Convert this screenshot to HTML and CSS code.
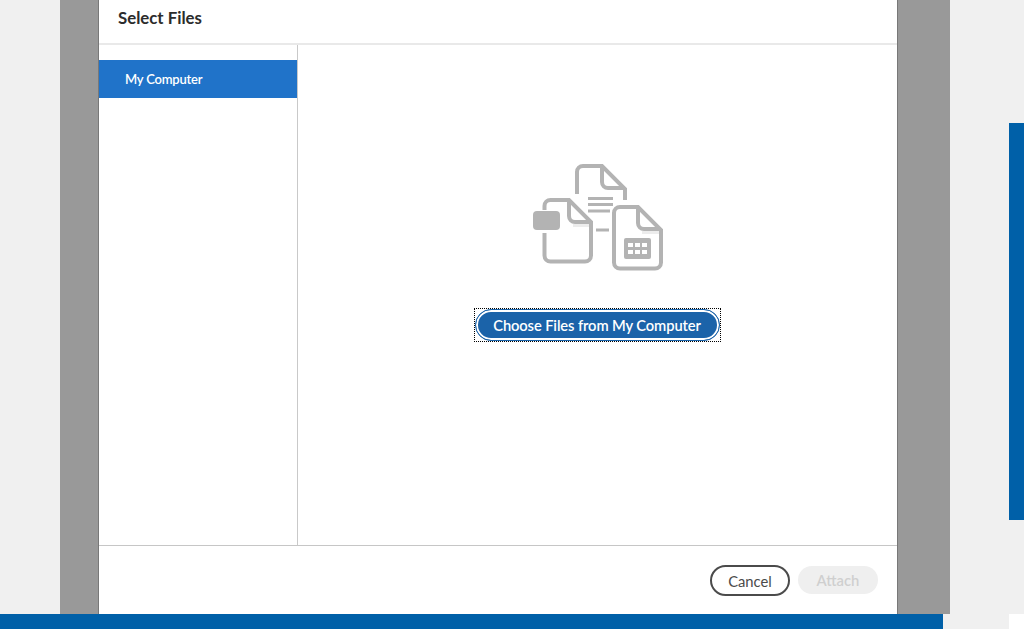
FILE: index.html
```html
<!DOCTYPE html>
<html lang="en">
<head>
<meta charset="utf-8">
<title>Select Files</title>
<link rel="stylesheet" href="styles.css">
</head>
<body>
<div class="page">
  <div class="main">
    <div class="rail"><div class="rail-bar"></div></div>
  </div>
  <div class="bottom">
    <div class="bottom-bar"></div>
    <div class="bottom-gap"></div>
    <div class="bottom-end"></div>
  </div>
  <div class="backdrop">
    <div class="dialog">
      <header class="dialog-head"><h1 class="dialog-title">Select Files</h1></header>
      <div class="dialog-body">
        <nav class="side">
          <div class="side-item">My Computer</div>
        </nav>
        <section class="pane">
          <svg class="files-icon" viewBox="528 160 140 115" width="140" height="115" aria-hidden="true">
            <g class="icon-soft">
              <rect x="573" y="224" width="17" height="3"/>
              <rect x="642" y="231" width="17" height="3"/>
            </g>
            <g class="icon-line">
              <path d="M577 194V172a6 6 0 0 1 6-6h19l23 23v11"/>
              <path d="M602 166v16a6 6 0 0 0 6 6h17"/>
              <path d="M544.500 233v22.500a6 6 0 0 0 6 6h34.500a6 6 0 0 0 6-6v-33.500l-22-22h-18.500a6 6 0 0 0-6 6v4"/>
              <path d="M569 200v16a6 6 0 0 0 6 6h16"/>
              <path d="M614 262.500v-49.500a6 6 0 0 1 6-6h18l23 23v32.500a6 6 0 0 1-6 6h-35a6 6 0 0 1-6-6z"/>
              <path d="M638 207v16a6 6 0 0 0 6 6h17"/>
            </g>
            <g class="icon-thin">
              <path d="M588 198.500h25M588 204.500h25M588 211h22M596 230h13"/>
            </g>
            <rect class="icon-fill" x="533" y="211" width="27" height="19" rx="4"/>
            <rect class="icon-fill" x="624" y="238" width="27" height="21" rx="2"/>
            <g class="icon-cell">
              <rect x="628" y="243" width="5" height="4"/>
              <rect x="635" y="243" width="5" height="4"/>
              <rect x="642" y="243" width="5" height="4"/>
              <rect x="628" y="250" width="5" height="4"/>
              <rect x="635" y="250" width="5" height="4"/>
              <rect x="642" y="250" width="5" height="4"/>
            </g>
          </svg>
          <div class="focus-box">
            <button class="choose" type="button">Choose Files from My Computer</button>
          </div>
        </section>
      </div>
      <footer class="dialog-foot">
        <button class="pill cancel" type="button">Cancel</button>
        <button class="pill attach" type="button" disabled>Attach</button>
      </footer>
    </div>
  </div>
</div>
</body>
</html>
```

FILE: styles.css
```css
* { box-sizing: border-box; }
html, body { margin: 0; height: 100%; }
body {
  font-family: Lato, "Open Sans", "Liberation Sans", sans-serif;
  background: #f0f0f0;
  overflow: hidden;
}
.page {
  position: relative;
  width: 1024px;
  height: 629px;
  display: flex;
  flex-direction: column;
}
.main { height: 614px; display: flex; justify-content: flex-end; }
.rail { width: 15px; padding-top: 123px; }
.rail-bar { height: 397px; background: #0060a8; }
.bottom { height: 15px; display: flex; }
.bottom-bar { width: 943px; background: #0060a8; }
.bottom-gap { width: 66px; }
.bottom-end { flex: 1; background: #fff; }

.backdrop {
  position: absolute;
  left: 60px;
  top: 0;
  width: 890px;
  height: 614px;
  background: #999;
  padding-left: 38px;
}
.dialog {
  width: 800px;
  height: 614px;
  background: #fff;
  border-left: 1px solid #787878;
  border-right: 1px solid #787878;
  display: flex;
  flex-direction: column;
}
.dialog-head {
  height: 45px;
  border-bottom: 2px solid #e9e9e9;
  padding: 7px 0 0 19px;
}
.dialog-title {
  margin: 0;
  font-size: 16.800px;
  line-height: 22px;
  font-weight: 700;
  color: #2c2c2c;
}
.dialog-body { height: 501px; display: flex; border-bottom: 1px solid #c6c6c6; }
.side { width: 199px; border-right: 1px solid #c9c9c9; padding-top: 15px; }
.side-item {
  height: 38px;
  background: #2073c9;
  color: #fff;
  font-size: 13px;
  font-weight: 600;
  line-height: 39px;
  padding-left: 26px;
  letter-spacing: -0.2px;
}
.pane {
  flex: 1;
  display: flex;
  flex-direction: column;
  align-items: center;
  padding-top: 115px;
}
.files-icon { display: block; }
.icon-line { fill: none; stroke: #b3b3b3; stroke-width: 4; }
.icon-thin { fill: none; stroke: #b3b3b3; stroke-width: 3; }
.icon-soft { fill: #ececec; }
.icon-fill { fill: #b3b3b3; }
.icon-cell { fill: #fff; }
.focus-box {
  margin: 33px 1px 0 0;
  width: 247px;
  height: 34px;
  border: 1px dotted #000;
}
.choose {
  display: block;
  width: 100%;
  height: 32px;
  padding: 0;
  border: 1px solid #1b63a9;
  border-radius: 16px;
  background: #1b63a9;
  box-shadow: inset 0 0 0 2px #fff;
  color: #fff;
  font: 600 14.700px/30px Lato, "Open Sans", "Liberation Sans", sans-serif;
  letter-spacing: -0.1px;
}
.dialog-foot {
  flex: 1;
  display: flex;
  justify-content: flex-end;
  align-items: center;
  gap: 8px;
  padding: 0 19px 0 0;
}
.pill {
  width: 80px;
  height: 31px;
  padding: 0;
  border-radius: 16px;
  font: 400 14.800px/29px Lato, "Open Sans", "Liberation Sans", sans-serif;
}
.cancel { background: #fff; border: 2px solid #4b4b4b; color: #4b4b4b; }
.attach { height: 28px; background: #efefef; border: 0; color: #cfcfcf; font-weight: 600; }
```
